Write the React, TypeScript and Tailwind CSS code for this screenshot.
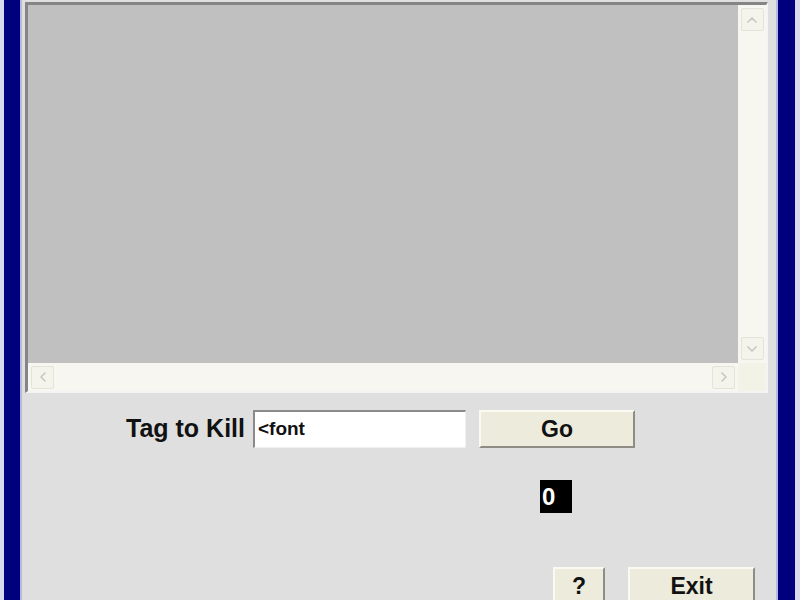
import { ChevronDown, ChevronLeft, ChevronRight, ChevronUp } from "lucide-react";

const font = "font-['Liberation_Sans',Arial,sans-serif]";

function ScrollButton({ children }: { children: React.ReactNode }) {
  return (
    <div className="flex size-[23px] items-center justify-center rounded-[2px] border border-[#e4e3d8] bg-[#f4f3ec] text-[#c9c8bf]">
      {children}
    </div>
  );
}

function WinButton({ label, className }: { label: string; className: string }) {
  return (
    <button
      type="button"
      className={`flex shrink-0 items-center justify-center border-t-2 border-l-2 border-t-[#fbfaf2] border-l-[#fbfaf2] border-r-2 border-b-2 border-r-[#8e8d85] border-b-[#8e8d85] bg-[#ecebdc] text-[23px] font-bold text-[#111] ${className}`}
    >
      {label}
    </button>
  );
}

export default function App() {
  return (
    <div className={`flex h-[600px] w-[800px] overflow-hidden bg-[#dfdfdf] ${font}`}>
      <div className="w-[4px] bg-[#d9d9ee]" />
      <div className="w-[16px] bg-[#00007e]" />
      <div className="w-[2px] bg-[#b8b8e0]" />

      <div className="flex flex-1 flex-col">
        {/* list box */}
        <div className="ml-[3px] mr-[8px] mt-[2px] h-[391px] shrink-0 border-l-[3px] border-t-[3px] border-l-[#858585] border-t-[#858585] border-r-2 border-b-2 border-r-[#f4f4f4] border-b-[#f4f4f4]">
          <div className="grid h-full grid-cols-[1fr_28px] grid-rows-[1fr_28px]">
            <div className="bg-[#c0c0c0]" />
            <div className="flex flex-col items-center justify-between bg-[#f7f6f0] py-[3px]">
              <ScrollButton>
                <ChevronUp className="size-4" strokeWidth={2.5} />
              </ScrollButton>
              <ScrollButton>
                <ChevronDown className="size-4" strokeWidth={2.5} />
              </ScrollButton>
            </div>
            <div className="flex items-center justify-between bg-[#f7f6f0] px-[3px]">
              <ScrollButton>
                <ChevronLeft className="size-4" strokeWidth={2.5} />
              </ScrollButton>
              <ScrollButton>
                <ChevronRight className="size-4" strokeWidth={2.5} />
              </ScrollButton>
            </div>
            <div className="bg-[#f3f2e6]" />
          </div>
        </div>

        {/* tag row */}
        <div className="mt-[17px] flex shrink-0 items-center">
          <span className="ml-[104px] text-[25px] font-bold text-[#111]">Tag to Kill</span>
          <div className="ml-[8px] flex h-[38px] w-[213px] items-center border-l-2 border-t-2 border-l-[#8a8a8a] border-t-[#8a8a8a] border-r border-b border-r-[#f0f0f0] border-b-[#f0f0f0] bg-white pl-[3px] text-[19px] font-bold text-[#111]">
            &lt;font
          </div>
          <WinButton label="Go" className="ml-[13px] h-[38px] w-[156px]" />
        </div>

        {/* count */}
        <div className="mt-[32px] flex shrink-0">
          <div className="ml-[518px] flex h-[33px] w-[32px] items-center bg-black pl-[2px] text-[24px] font-bold text-white">
            0
          </div>
        </div>

        {/* bottom buttons */}
        <div className="mt-[54px] flex shrink-0">
          <WinButton label="?" className="ml-[531px] h-[38px] w-[52px]" />
          <WinButton label="Exit" className="ml-[23px] h-[38px] w-[127px]" />
        </div>
      </div>

      <div className="w-[2px] bg-[#b8b8e0]" />
      <div className="w-[17px] bg-[#00007e]" />
      <div className="w-[5px] bg-[#d9d9ee]" />
    </div>
  );
}
